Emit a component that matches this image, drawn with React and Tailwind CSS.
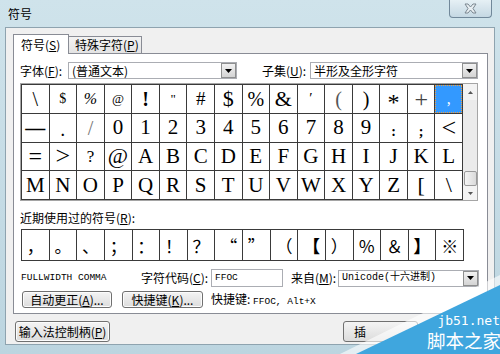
import React from 'react';

const cjk = "font-['Noto_Sans_CJK_SC',sans-serif]";
const mono = "font-['Liberation_Mono','Noto_Sans_CJK_SC',monospace]";

const rows = [
    [['\\', 'text-[20px]'], ['$', 'text-[14px]'], ['%', 'text-[16px] italic'], ['@', 'text-[13px]'], ['!', 'text-[20px] font-bold'], ['"', 'text-[13px]'], ['#', 'text-[19px]'], ['$', 'text-[22px]'], ['%', 'text-[20px]'], ['&', 'text-[22px]'], ['′', 'text-[15px]'], ['(', 'text-[20px] text-[#555]'], [')', 'text-[20px]'], ['*', 'text-[24px] pt-[6px]'], ['+', 'text-[24px] font-light text-[#444]'], [',', 'text-[16px]']],
    [['—', 'text-[20px] font-bold'], ['.', 'text-[14px] pt-[8px] font-bold'], ['/', 'text-[20px] text-[#777]'], ['0', ''], ['1', ''], ['2', ''], ['3', ''], ['4', ''], ['5', ''], ['6', ''], ['7', ''], ['8', ''], ['9', ''], [':', 'text-[14px] pt-[8px] font-bold'], [';', 'text-[14px] pt-[8px] font-bold'], ['<', 'text-[26px] font-light']],
    [['=', 'text-[24px]'], ['>', 'text-[26px]'], ['?', 'text-[17px]'], ['@', 'text-[22px]'], ['A', ''], ['B', ''], ['C', ''], ['D', ''], ['E', ''], ['F', ''], ['G', ''], ['H', ''], ['I', ''], ['J', ''], ['K', ''], ['L', '']],
    [['M', ''], ['N', ''], ['O', ''], ['P', ''], ['Q', ''], ['R', ''], ['S', ''], ['T', ''], ['U', ''], ['V', ''], ['W', ''], ['X', ''], ['Y', ''], ['Z', ''], ['[', 'text-[22px]'], ['\\', 'text-[22px]']],
];

const recent = ['，', '。', '、', '；', '：', '！', '？', '“', '”', '（', '【', '）', '％', '＆', '】', '※'];

const DropArrow = () => (
    <div className="w-[15px] h-[15px] border border-[#8e8f8f] bg-gradient-to-b from-[#f2f2f2] to-[#d4d4d4] flex items-center justify-center">
        <svg width="7" height="4" viewBox="0 0 7 4"><path d="M0 0h7L3.5 4z" fill="#000" /></svg>
    </div>
);

const Select = ({ width, children }) => (
    <div className={`${width} h-[17px] border border-[#abadb3] bg-white flex items-center justify-between pl-[3px]`}>
        <span className="text-[12px] leading-none whitespace-nowrap">{children}</span>
        <DropArrow />
    </div>
);

const Button = ({ width, height = 'h-[17px]', children }) => (
    <div className={`${width} ${height} border border-[#707070] rounded-[3px] bg-gradient-to-b from-[#f4f4f4] to-[#dcdcdc] flex items-center justify-center text-[12px] leading-none whitespace-nowrap shadow-[inset_0_0_0_1px_#fcfcfc]`}>
        {children}
    </div>
);

const App = () => {
    return (
        <div className={`w-[500px] h-[354px] relative overflow-hidden bg-gradient-to-b from-[#cfe3eb] to-[#bcd5e0] ${cjk} text-black`}>
            <div className="h-[27px] flex justify-between items-start">
                <span className="pl-[8px] pt-[5px] text-[12px]">符号</span>
                <div className="mr-[8px] w-[43px] h-[18px] border border-t-0 border-[#71889a] rounded-b-[4px] bg-gradient-to-b from-[#e6f0f5] to-[#c5d8e3] flex items-center justify-center">
                    <svg width="13" height="11" viewBox="0 0 13 11">
                        <path d="M1 1h3l2.5 3 2.5-3h3L9 5.5l3 4.5H9L6.5 7 4 10H1l3-4.5z" fill="#e8eef2" stroke="#7a8690" strokeWidth="1" />
                    </svg>
                </div>
            </div>

            <div className="mx-[5px] h-[318px] border border-[#8ea3af] bg-[#f0f0f0] pl-[7px] pr-[6px] pt-[5px]">
                <div className="flex items-end h-[20px] text-[12px]">
                    <div className="w-[56px] h-[20px] border border-b-0 border-[#898c95] bg-white flex items-center pl-[7px] relative top-px z-10">
                        符号(<u>S</u>)
                    </div>
                    <div className="w-[73px] h-[17px] border border-l-0 border-b-0 border-[#898c95] bg-gradient-to-b from-[#f3f3f3] to-[#e3e3e3] flex items-center pl-[6px]">
                        特殊字符(<u>P</u>)
                    </div>
                </div>

                <div className="w-[475px] h-[261px] border border-[#898c95] bg-white pl-[6px] pt-[8px]">
                    <div className="flex items-center h-[17px] text-[12px]">
                        <span className="w-[48px]">字体(<u>F</u>):</span>
                        <Select width="w-[169px]">(普通文本)</Select>
                        <span className="ml-[25px] w-[48px]">子集(<u>U</u>):</span>
                        <Select width="w-[168px]">半形及全形字符</Select>
                    </div>

                    <div className="mt-[4px] w-[458px] h-[118px] border border-[#a5a5a5] flex">
                        <div className="w-[442px] h-[116px] grid grid-cols-16 grid-rows-4 gap-px p-px bg-[#3a3a3a] font-['Liberation_Serif',serif]">
                            {rows.flat().map(([ch, cls], i) => (
                                <div
                                    key={i}
                                    className={`flex items-center justify-center leading-none ${cls || 'text-[21px]'} ${i === 15 ? 'bg-[#3399ff] text-white border border-dotted border-[#f0a040]' : 'bg-white'}`}
                                >
                                    {ch}
                                </div>
                            ))}
                        </div>
                        <div className="w-[14px] h-[116px] bg-[#ebebeb] flex flex-col items-center">
                            <div className="h-[16px] w-full bg-[#f3f3f3] flex items-center justify-center">
                                <svg width="5" height="3" viewBox="0 0 5 3"><path d="M0 3h5L2.5 0z" fill="#555" /></svg>
                            </div>
                            <div className="flex-1" />
                            <div className="h-[15px] w-[13px] border border-[#9a9a9a] rounded-[2px] bg-gradient-to-r from-[#f4f4f4] to-[#dadada]" />
                            <div className="h-[14px] w-full bg-[#f3f3f3] flex items-center justify-center">
                                <svg width="5" height="3" viewBox="0 0 5 3"><path d="M0 0h5L2.5 3z" fill="#555" /></svg>
                            </div>
                        </div>
                    </div>

                    <div className="mt-[9px] text-[12px] leading-[16px]">近期使用过的符号(<u>R</u>):</div>

                    <div className="mt-[3px] ml-px w-[443px] h-[32px] grid grid-cols-16 gap-px p-px bg-[#3a3a3a]">
                        {recent.map((ch, i) => (
                            <div
                                key={i}
                                className={`bg-white flex items-center justify-center leading-none text-[17px] ${ch === '【' || ch === '】' ? 'font-black' : ''}`}
                            >
                                {ch}
                            </div>
                        ))}
                    </div>

                    <div className="mt-[8px] flex items-center h-[18px] text-[12px]">
                        <span className={`${mono} text-[9.5px] w-[121px] pl-px`}>FULLWIDTH COMMA</span>
                        <span className="w-[70px]">字符代码(<u>C</u>):</span>
                        <div className={`w-[72px] h-[18px] border border-[#abadb3] bg-white flex items-center pl-[3px] ${mono} text-[9.5px]`}>FFOC</div>
                        <span className="ml-[8px] w-[47px]">来自(<u>M</u>):</span>
                        <div className="w-[141px] h-[17px] border border-[#abadb3] bg-white flex items-center justify-between pl-[3px]">
                            <span className={`${mono} text-[10px] leading-none whitespace-nowrap`}>Unicode(十六进制)</span>
                            <DropArrow />
                        </div>
                    </div>

                    <div className="mt-[4px] flex items-center h-[17px] pl-[2px]">
                        <Button width="w-[90px]">自动更正(<u>A</u>)...</Button>
                        <div className="w-[10px]" />
                        <Button width="w-[81px]">快捷键(<u>K</u>)...</Button>
                        <span className="ml-[8px] text-[12px] whitespace-nowrap">
                            快捷键: <span className={`${mono} text-[9.5px]`}>FFOC, Alt+X</span>
                        </span>
                    </div>
                </div>

                <div className="mt-[7px] flex items-center h-[21px] ml-[2px]">
                    <Button width="w-[95px]" height="h-[21px]">输入法控制柄(<u>P</u>)</Button>
                    <div className="w-[233px]" />
                    <div className="w-[75px] h-[21px] border border-[#707070] rounded-[3px] bg-gradient-to-b from-[#f4f4f4] to-[#dcdcdc] flex items-center pl-[10px] text-[12px] leading-none">
                        插
                    </div>
                </div>
            </div>

            <div className="absolute right-0 bottom-0 w-[170px] h-[90px]">
                <svg width="170" height="90" viewBox="0 0 170 90" className="absolute inset-0">
                    <path d="M10 90L170 11V90z" fill="#ffffff" fillOpacity="0.6" />
                    <path d="M26 90L170 21V90z" fill="#3fa6de" />
                </svg>
                <div className="absolute right-0 top-[50px] text-white font-['DejaVu_Sans_Mono',monospace] text-[13px] leading-[13px] whitespace-nowrap">
                    jb51.net
                </div>
                <div className="absolute left-[97px] top-[67px] text-white text-[18.5px] leading-none whitespace-nowrap">
                    脚本之家
                </div>
            </div>
        </div>
    );
};

export default App;
